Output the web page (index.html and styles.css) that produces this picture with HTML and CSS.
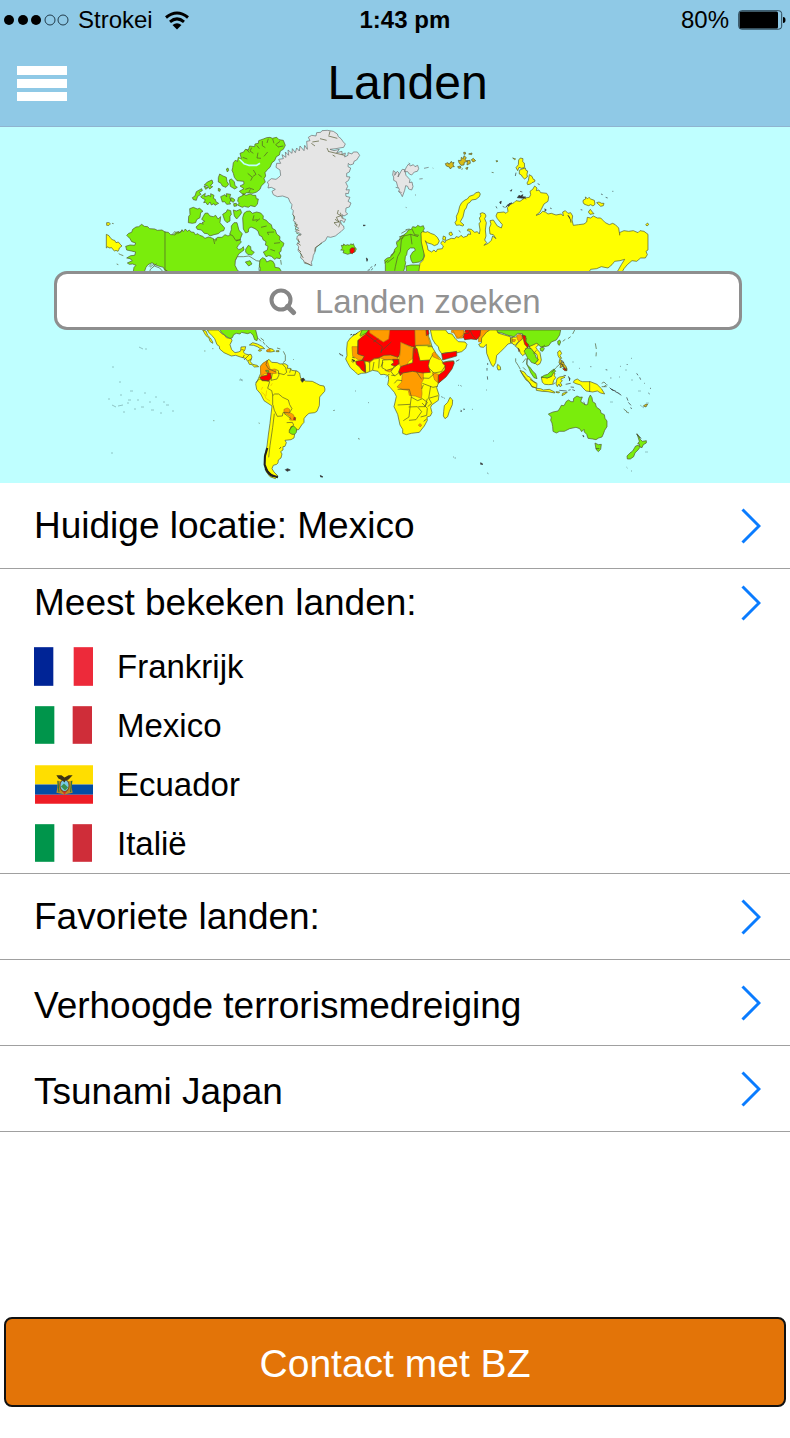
FILE: index.html
```html
<!DOCTYPE html>
<html lang="nl">
<head>
<meta charset="utf-8">
<meta name="viewport" content="width=device-width, initial-scale=1">
<title>Landen</title>
<link rel="stylesheet" href="styles.css">
</head>
<body>
<div class="app">
  <header class="header">
    <div class="status">
      <div class="status-left">
        <svg class="signal" width="66" height="12" viewBox="0 0 66 12" aria-hidden="true">
          <circle cx="5" cy="6" r="5"/><circle cx="19" cy="6" r="5"/><circle cx="32" cy="6" r="5"/>
          <g fill="none" stroke="#223b4a"><circle cx="46" cy="6" r="5"/><circle cx="59" cy="6" r="5"/></g>
        </svg>
        <span>Strokei</span>
        <svg class="wifi" width="24" height="19" viewBox="0 0 24 19" aria-hidden="true">
          <g fill="none" stroke="#000" stroke-width="3"><path d="M1 6.5Q12-2.5 23 6.5"/><path d="M5 10.800Q12 5 19 10.800"/></g>
          <path d="M7.500 14Q12 10.500 16.500 14L12 18.500z"/>
        </svg>
      </div>
      <span class="time">1:43 pm</span>
      <div class="status-right">
        <span>80%</span>
        <svg width="48" height="20" viewBox="0 0 48 20" aria-hidden="true">
          <rect x=".7" y=".7" width="43" height="18.500" rx="3" fill="none" stroke="#2b4757"/>
          <rect x="1.500" y="1.500" width="38.500" height="17" rx="1.500"/><path d="M45 7q2.500 0 2.500 3T45 13z"/>
        </svg>
      </div>
    </div>
    <div class="nav">
      <button class="menu" type="button" aria-label="Menu"><span></span><span></span><span></span></button>
      <h1>Landen</h1>
    </div>
  </header>

  <main>
    <section class="hero">
      <svg class="map" viewBox="0 127 790 356" role="img" aria-label="Wereldkaart met reisadviezen">
        <!-- North America -->
        <g class="land" transform="translate(100 126) scale(.33333)">
          <path class="yellow" d="M19 325l8 4 6 9 6 4 5 1 4 7 7-2 6 7 5 5-8 6-1 4-3 6-6-3-4 2-5-4-4-6-8 1-3-4-5 4zM20 290h8l3 4-4 4h-7zM36 292l5 1M50 414l5 2M56 383l6 3 8 3"/>
          <path class="green" d="M80 328L86 322 95 319 98 310 108 303 116 302 125 295 133 301 143 302 149 308 164 309 172 313 186 312 195 318 205 319 212 326 222 326 227 319 235 317 240 321 246 311 250 317 256 309 262 316 268 312 273 318 282 319 286 326 294 323 299 328 308 331 315 337 325 333 336 336 344 341 353 334 366 334 375 326 384 330 392 326 397 316 404 309 408 315 416 315 422 328 417 338 424 348 415 358 411 365 416 371 424 368 430 362 432 372 424 378 416 384 411 394 406 405 408 420 412 428 418 434 418 446H225L208 438 195 434 190 424 175 420 165 416 156 410 144 416 138 424 130 446 105 446 100 436 102 424 108 418 98 414 88 415 82 411 97 404 90 398 80 396 92 389 104 388 107 378 94 375 80 372 77 361 90 357 104 358 107 351 95 347 90 338z"/>
          <path class="sea" d="M412 392l-6 12-1 14 8 16 26 12h40l-2-18 4-22-12-2-22-14-16 2zM147 446l4-16 12-10 16 6 18 20z"/>
          <path class="green" d="M437 370l8-12 7 4 1 10 10 7-8 8-12-2-6-7zM436 408l14-4 6 10-10 6zM480 402l8-7 8 4 4 9 11-5 8 3 5 9 1 9 13 2 6 10v12h-66l3-20-3-9z"/>
          <path class="green" d="M428 275L432 262 440 256 450 255 457 262 470 258 482 261 490 270 489 279 499 283 506 291 514 296 517 307 526 312 530 324 540 332 539 342 552 352 549 361 544 366 543 376 537 380 543 390 540 398 530 396 524 400 514 391 506 389 498 392 490 378 502 372 504 361 496 357 498 347 489 341 486 332 478 328 474 315 465 308 453 303 446 308 445 318 437 321 430 309z"/>
          <path d="M195 316V430l8 6 3 10M216 326l10-11M223 328l15-12M233 323l15-10M340 338l4 16M350 338l-3 8M147 422l8-9M150 424l12-10M160 421l10-8M408 345l15-5M542 402l2 14"/>
          <path class="green" d="M265 290l1-19 4-5-1-18 11-4 12 5 7-2 10 9-7 4-2 15-10 6-3 9-10 2zM288 303L300 292 310 294 306 290 314 286 305 280 315 262 323 261 330 270 340 272 347 268 354 279 362 272 360 290 374 306 371 314 363 316 355 323 342 326 330 330 322 323 313 322 304 312 292 310zM368 265l11-7 3-7 10 3 2 12-4 4 0 15-9 5-7-7zM400 252l9 3 12-5 4 10-7 10-8 9-7-9zM394 300l8-10 9 0 6 23 10 10-7 18-13 2-9-14-9-4 5-14z"/>
          <path class="green" d="M398 125L400 110 407 102 412 107 415 94 424 98 420 82 431 78 436 70 445 72 449 60 464 62 465 54 475 52 476 44 490 39 500 35 510 34 517 37 530 34 537 41 550 43 556 58 550 70 541 75 538 87 529 92 524 104 516 110 510 124 503 130 495 140 497 150 492 158 496 168 484 180 480 190 470 198 458 202 440 200 430 206 418 196 432 188 420 180 432 174 431 166 411 164 403 154 400 142 396 133zM415 215l14-7 0-5 9 5 13-4 8 4 8 0 2 10 6 1-3 16-7 7-13-3-7 5-12-3-6 3-15-7 6-6-5-5z"/>
          <path class="green" d="M277 215l8-5 4-13 16-9 2 6-9 5 5 6-10 6-4 12-9-2zM302 212l14-10-2 10 13-4 5 4 0-9 10 5-2 9 6 3 2 7 8 5-11 6-3-5-8 4-4-9-7 9-6-8-6 1 5-9-9-4zM322 168l14-6 3 9-8 8 7 3-9 7-7-10-9-2zM312 180l12 5-7 5zM355 155l4-11 10 6 10 4 2 13 5 8-8 9-11-4-4-8-8-4zM388 162l6-3 9 8 2 12 7 5-8 5-13-8zM362 212l13-6 5 7-1-10 13 2-3 10 4 8-4 6 3 5-12 1-6-8-7 1zM379 129l5-3 2 7-4 5zM392 215l7 2 6 5-5 7-8-5zM401 233l8-1 1 8-8 1zM355 187l6 2-1 7-5-1z"/>
          <path d="M440 70l8 10M455 65l-5 10 10 7M470 58l8 10M487 45l0 14 9 6M505 38l-4 13M518 39l4 13M540 46l-13 10 8 7M550 60l-16 3M428 94l14 5M474 80l-3 16 12 1M503 78l-11 13M443 142l14 12-5 10M460 132l8 13-10 7M475 145l10 8M436 190l12-4 14 5M446 200l5-10M462 268l-4 15 15-2M480 278l-12 9M500 300l-17 4M522 318l-20 1 4 8M540 350l-18 2M525 375l-14-5"/>
          <path class="channel" d="M418 99l14 14 14 5 24 0 10-6"/>
        </g>
        <!-- Greenland, Svalbard and Iceland -->
        <g class="land" transform="translate(260 126) scale(.33333)">
          <path class="gray" d="M140 46L150 44 145 34 155 28 168 30 170 20 182 19 186 14 202 13 220 16 232 24 235 32 243 38 250 48 256 54 251 64 238 66 228 68 210 70 222 74 238 70 230 80 246 76 246 85 256 81 254 93 264 88 264 80 276 84 280 78 292 78 299 88 290 102 282 106 280 114 270 117 265 112 264 122 272 126 268 138 260 142 260 152 270 153 265 164 257 169 263 181 258 192 268 191 265 203 257 202 258 211 270 214 264 226 273 231 268 243 258 246 257 258 263 264 252 270 247 266 249 278 257 280 252 290 247 284 240 284 246 297 251 300 252 308 244 316 236 322 226 330 212 334 202 332 196 344 184 351 174 360 168 364 166 376 160 388 158 400 154 409 156 419 145 414 134 412 130 402 122 396 124 384 114 374 116 362 110 354 120 348 110 340 112 330 124 325 116 320 106 316 116 306 104 300 108 290 100 284 104 272 98 266 100 254 94 248 96 236 90 228 85 216 68 210 52 212 40 206 36 196 46 190 34 184 24 186 26 176 22 168 34 158 48 160 56 154 62 148 60 132 48 124 50 112 62 112 56 100 70 98 66 86 78 94 76 78 86 88 84 72 96 82 97 68 106 80 110 66 118 75 120 60 132 74 134 58 142 70z"/>
          <path d="M157 48l20-3M180 38l20 5M205 30l27 7M210 16l-3 12M165 60l-11-8M205 75l-4-9M226 92l-8-5M235 252l-3 11 11 6-14 5 8 14-15 2 10 10M241 260l6 18M225 280l16 10-5 14M102 290l12 8M108 320l14 8M112 350l10 8M115 370l8 8M204 76l50 12"/>
          <path d="M186 351l-20 14-2 12M100 266l4 14M110 296l-4 14 12 4M114 338l2 10M120 380l10 16M134 408l18 10"/>
          <path class="gray" d="M400 134l6 4-2 10 8-12 5 5-3 12 9-17 4-6 7 1 4 17 12 13-2 9 8-2 3 14-4 10-9-3-3-8-6-2-3 14-7 19-5-10-6-5 2-7-5-8-4-15-8-4 0-10-3-6zM435 132l5-10 6-8 5 6 9-4 5 6 8-4 3 10-4 8-9 2-8 9-7-3-5-7-10 0zM407 184l8 2M416 196l9 4M446 111l5 3M478 159l10-1M492 127l14-3M465 206l3 2M437 244l3 1M518 126l2 1"/>
          <path class="green" d="M244 358l7 1-1-5 7 4 6-2 5 2 5-5 3 4 4-4 3 8 6 8-4 9-10 3-12 4-14-5 3-7-10-1 5-5z"/>
          <path class="red" d="M270 370l5-5 9 1-1 11-6 6-7-3z"/>
          <path class="ink" d="M310 297l6 1-5 2zM319 396l4 3-2 7zM347 414l-3 7M336 421l-5 6M338 427l-4 6M323 433l7-2"/>
        </g>
        <!-- Scandinavia and Russia -->
        <g class="land" transform="translate(380 126) scale(.33333)">
          <path class="green" d="M14 402L22 396 31 394 34 386 41 381 44 370 52 361 49 350 57 344 62 332 70 328 80 320 85 312 94 310 98 302 108 304 113 298 121 302 130 299 133 308 130 313 133 322 126 332 128 358 130 368 133 382 131 394 127 402 118 408 98 411 93 402 91 390 98 378 106 373 103 366 91 366 82 374 80 386 76 392 75 404 77 410 74 425 68 446H16V416zM78 420l15-3 25 0 4 6v23H80z"/>
          <path d="M44 434l2-12 7-30 8-15 3-35 8-12 20-5 22 7M92 325l4 30M96 309l8 17 13 2M22 410l20-16M14 411l11-9M34 391l11-16M49 347l20-13M57 333l17-6M64 322l16-9M77 311l12-2"/>
          <path class="yellow" d="M123 321L128 317 137 319 143 317 152 322 163 326 172 334 178 345 173 355 163 359 154 354 140 350 136 344 142 360 144 372 155 378 162 372 168 378 172 370 187 368 190 360 182 352 188 344 195 350 197 344 214 337 224 338 228 332 237 334 243 328 250 334 262 330 264 324 272 325 270 316 262 314 264 309 274 310 284 319 292 317 298 324 300 312 297 292 302 288 298 276 303 270 300 263 307 260 315 263 318 270 314 278 319 290 316 312 318 330 314 342 320 350 312 358 325 352 334 343 338 330 348 338 340 326 330 324 328 306 333 294 330 284 340 282 352 300 364 306 367 296 352 278 348 270 352 260 372 258 378 262 384 256 382 244 390 236 402 230 408 224 420 226 434 216 448 214 452 206 450 196 458 190 464 180 471 186 469 194 477 192 482 200 500 202 506 212 504 226 492 234 484 250 480 258 468 268 480 264 488 256 496 258 504 264 514 262 528 267 544 264 550 270 548 258 556 254 564 262 572 260 578 270 576 282 580 298 596 296 612 294 620 288 622 274 632 276 640 270 652 276 662 276 670 284 676 290 688 296 698 292 706 296 716 306 718 320 732 314 746 316 760 314 774 320 780 314 792 316 804 325 804 372 798 376 802 386 796 396 782 396 770 406 756 404 742 416 732 428 722 446 706 446 716 430 724 416 734 400 720 404 704 406 696 416 684 426 664 422 650 428 632 430 622 446H115L120 412 128 404 134 390 128 366 124 348z"/>
          <path class="yellow" d="M225 290l5-8-1-11 6-13 4-17 6-11 10-8 7-3 6-8 12-4 8-7 9-2 4 6-3 8-10 8-13 2-5 7-7 4-5 15-4 3-5 22-8 14 11 10-4 3-10-3-9 1zM408 125l7-9 1-14 5-6 8 2-1 9 5 4 1 13-9 3-8-3-4 10zM418 133l8-4 10-3 2 7 5 2-2 10 1 8-8 6-6-5-4-7-6-3zM448 146l8 5 4 9 5 2-1 5-8 3-4 4-9 2-2-5 4-7zM610 222l7-3-1-6 7 5 4-4 5 5 11 4 2 12-6 5-7-4-6 3-7-2-7-3-3-6zM650 230l7-2 8 4 7 0-2 7-8 2zM625 258l6-8 6 8 5 5-12 2zM208 320l6-2 4 8-6 3-5-4zM190 330l7 3-1 10-8-3zM237 313l4 6M797 296l6-5 3 5-5 4zM398 96l9 3-3 2zM348 104l6 1-4 3z"/>
          <path class="gold" d="M196 113l8-3 3 5 7-9 3 5 5-2-3 8 4 5-5 0-7 7-3-6-9-3zM237 110l-2-7 8 1 1-10 6 4 2-9 7 6-4 6 7 5-9 3-1 8-9 1zM261 104l9-1 1 9-10 5 1-10zM274 101l6-4 7 7-8 4zM251 79l5 0 1 5-5 1zM266 84l10-3-1 5zM233 122l8-2 2 6-7 1zM257 126l7-2-3 7zM335 139l6 1M244 130l5-2"/>
          <path class="ink" d="M377 244l7-8 2 5 4-7 6-3-9 2-6 7zM412 215l5-7 4 2 8-4-3 6 11 1-5 4zM359 228l5-2-2 8zM368 241l6 3M348 241l3 6M391 194l5-3-3 5zM420 196l7 2M473 173l6 3M435 216l3 4M570 276l-6-8 8 14 1 8M719 320v8M494 248l5 4-5 4M510 246l5 2M663 204l5 2M677 214l6 2M697 196h3M602 251l5 1M408 140l-2 10"/>
        </g>
        <!-- Central and South America -->
        <g class="land" transform="translate(190 320) scale(.33333)">
          <path class="green" d="M84 20h113v10l6 24-2 8-7-3-5-14-8-7-8 3-10-2-8-2-5 5-11-2-8 4-4 9-5 2-5 0-12-9-11-9z"/>
          <path class="yellow" d="M52 30h33l10 11 8 4 6 8 15 3 2 6-6 12 5 15 10 9 10-2 7-3 1-12 14-1-2 9-5 7 6 6 9 2 8-1 3 8-5 14 7 8 13 3 5 4-13 1-7-7-8-1-3-7-9-11-15-4-14-5-13 2-22-10-13-11-1-8-7-5-7-18-9-10-8-8zM38 30l10 3 5 13 8 8 7 12 0 4-8-6-3-10-9-7z"/>
          <path class="yellow" d="M212 138l8-9 9-5 8-6 8 9 17 1 8 4 15-1 9 6-2 8 9 0 4 6 16 2 8 6 3 16 8 1 5 7 22 1 12 6 11 6 12 2 3 9-1 7-9 10-6 7-1 26-7 17-7 4-17 2-9 8-6 8 0 11-7 8-9 14-12 1-4 3 4 10-2 11-9 5-18 2 4 7-4 11-6 1 0 10-7 5 4 7-3 12-8 6-1 9-4 4L250 436 246 446 252 456 264 468 256 476 240 470 229 456 223 438 223 410 231 378 235 345 240 310 246 258 234 250 222 242 212 222 200 208 197 192 205 176 212 160z"/>
          <path class="orange" d="M211 140l8-10 13-8 4 12 5 15 15-2 3 13-18 1-18 1-10 6-1-15zM282 268l10-4 7 4-1 9 12 7 4 10-3 7-12-1 2-10-10-7-9-5z"/>
          <path class="red" d="M209 172l8-4 14-2 2-8 9 2 2 14-8 9-20-1zM312 292l5 1-1 8-5-2z"/>
          <path class="green" d="M303 320l8-2 9 9-1 10-5 6-8 0-9-6zM227 151l8 0 2 5-8 0z"/>
          <path class="yellow" d="M178 75l10-7 14 4 14 7 8 7-13 0-9-6-11-4zM207 89l8 1-4 4-6-2zM239 85l10 3 5 6-12 2-11-1-1-4 8-1zM259 92h8v3h-8z"/>
          <path class="orange" d="M232 89l7-3 2 8-11 0z"/>
          <path d="M197 188l11-11 22 5 9 3-6 20 12 7 3 13 0 30M248 227l6-5 12 0 12 10 17 8 4 14 7 12-8 13-10-2-9 1-2 10-15 1-9-18-4-16M253 281l-5 41-8 55-4 35M282 280l22 17M290 308l17-1 4 8-14 16M258 149l7 3 2 13-6 12-18 4 4-20M232 120l-4 14 8 13 22 9M277 132l10 11 3 14-8 7-19-5M303 145l-4 13M318 152l-4 14-22 0M163 105l-5 9M177 105l-15 15M185 116l-11 7M154 88l9 3"/>
          <path class="coast" d="M232 384l-7 24-1 26 8 20 12 12 20 6"/>
          <path class="coast" d="M226 445l12 17 13 7"/>
          <path class="ink" d="M332 179l8-5 4 5-7 8zM286 449l7-3 8 4-10 4zM391 466l8 5-7 0zM268 387l5-6M151 177l6 5"/>
          <path d="M212 54l10 8M205 55l8 9M219 65l6 9M228 76l10 9M261 84l10 3M280 94l6 12 0 16-7 6M482 44l4-1M488 45l6-2M497 45l6-3M449 101l3 5M455 103l4 5M70 302h3M67 86h3M206 309l3 1M430 271l2 2M505 355l3 2M43 93h3M310 118l2 2"/>
          <path class="sketch" d="M218 201l-4 8M214 216l10 8 4 12M229 236l11 7M247 190l-5 8M230 211l-2 17"/>
        </g>
        <!-- Africa and Arabia -->
        <g class="land" transform="translate(330 320) scale(.33333)">
          <path class="yellow" d="M95 30h198l3 20 6 15 4 15 12 20 12 14 9 13 18-4 15 0-5 17-17 25-25 25-5 13 7 22-2 16-20 14-3 7 4 16-5 10-10 3 1 10-9 17-15 19-24 3-15 4-11-4 0-12-8-13-7-32-11-23 4-17 3-14-6-12-12-14-8-9 3-15-1-12-13-4-10 1-8-10-16-3-20 8-14 1-10 4-8-8-15-13-9-16-5-10 4-10-1-20 2-20 9-13 9-7z"/>
          <path class="green" d="M96 30h22l-2 7-12 4-12 8-2-3z"/>
          <path class="orange" d="M66 80h20l0 24 30 4 14-4 16 6 14-10 24-2 22 4-4 20-30 0-20-8-20 4-14 10-14-8-18 0-18-12z"/>
          <path class="red" d="M84 61l22-18 10-13h71 68l2 54-43-15-5 35-5 8-22-7-20 1-17 8-12 1-13 9-26-1 9-14-20-7z"/>
          <path class="orange" d="M119 30h60l-3 27-16 9-15-10-26-18zM212 67l38 18-2 30-13 10-4 12-20 2-5-16 5-24zM255 30h35l2 13 9 30-45 3zM217 159l30-6 33 4 0 21-6 12 2 31-2 14-18-7-18-2-3-15-16-2-18-8 14-15zM306 102l7-7 16 24-20-9zM307 158l19 5-2 25-10-8zM165 151l12-13 7 4 2 8-8 6z"/>
          <path class="yellow" d="M158 120l22-1 14 2 6 14-10 10-20 6-14-8z"/>
          <path class="red" d="M250 85l11 0 4 16 5 21 29-2-4 17 6 20-23 2-30-5-30 5-7 8-5-12 6-15 36-12zM370 123l3 6-7 18-18 24-23 19 0-24 20-16 0-13-8-9 11-2zM77 124l12-2 12-1 5 15 1 22-12-8-6-9-10-8zM188 118l18 0 1 14-12 7-12-5 8-6zM288 30h7l2 12-8 5z"/>
          <path class="yellow" d="M301 30h46l7 10 12 2 10 14 9 9 20 1 6 7-4 12-12 10-17 4-28-1-15 3-8-11-2-10-9-8-9-15zM360 232l8 8-1 14-9 20-5 16-8 6-5-8 1-13 2-18 10-10z"/>
          <path class="red" d="M335 101l45-7 0 14-24 7-18 5zM405 30h45v26l-31-7-15 10z"/>
          <path class="orange" d="M365 30h32l10 8-9 16-18 1-6-15-10-3zM398 52l11 3 7-4-2-9-15 0z"/>
          <path d="M107 42l50 38-4 19M145 56l-15 10M184 66l-32 29M84 61l0 40M252 76l4 24M105 122v34M119 125v28M132 126l-4 24M148 116l-2 29M159 126l-6 14M193 138l-10 17 11 14M206 157l10 2M184 166h13l10-8M193 190l9-10 14 2M203 208l35 0 6 22-3 23-38 2M241 253l-4 38-17 11M243 231l20 11 14-6 15 11-7 13-20 0M236 261l26-1 13 15-17 24-21 2M276 249l16 16-2 21-18 5M277 190l32 12 14-3M278 174l19 1 15-13M280 195l-5 12M302 198l-6 37 28-8M292 236l-7 24M297 236l8 14-12 10M260 156l15 22M293 80h15M257 77h47M299 120l9-16M298 145l14 14 22-4 13-19"/>
          <path class="orange" d="M265 315l5-4 5 4-4 6z"/>
          <path class="ink" d="M66 111l8 3M66 118l9 4-4 3zM64 123l6 5M290 297l-9 7M61 45l5-2M68 46l6-3M76 44l6-5M28 100l5 4M34 104l4 5M334 230l4 2M341 233l3 2M392 271l4 3M401 266l3 2M168 172l3-3M175 165l3-3M76 213h2M12 271h2M115 248h2M86 357h2M392 196l2 3M378 124l10-5"/>
        </g>
        <!-- Asia and Oceania -->
        <g class="land" transform="translate(450 320) scale(.33333)">
          <path class="orange" d="M8 30h33l-1 15-14 9-9-7zM82 30h35l-8 13-9 8 4 12-18 3-2-19z"/>
          <path class="red" d="M43 40l12 0 5-10h32l-2 17-10 12-17-2-18 2-5-7z"/>
          <path class="green" d="M139 30h193l-3 15-10 15-15 6-8 11-15 4-10-1-8-8-15 5-7 4-9-5-12-17-3-18-14-1-11 10-18-4-18-7-15-2z"/>
          <path class="green" d="M270 85l8-4 5 5-5 8-6-2zM323 64l6-4 3 6-4 10-4-3z"/>
          <path class="yellow" d="M110 36l10-6h20l4 9 19 6 18 5 1 20-8 2-9 10-16 16-9 8-3 22-7 12-5-4-8-18-7-18-1-20 0-7-8 9-10-1-5-8 8-4 1-15zM143 133l8 7 1 9-8 1-3-9zM182 54l8-2 12-2 14-5 3 10-14 10-9 11-7-3-7-7zM196 79l8-11 12-10 5-12 8 8-2 18 9 9-10 5 2 13-10 8-7-8-4-12zM237 80l12-5 10-5 7 4-8 8 4 7 8 9 4 22-4 11-8 4-8-6 10-7-3-18-14-11z"/>
          <path class="red" d="M217 45l10 3 0 16 8 10-2 9-9-10zM204 84l5 8-2 3z"/>
          <path class="orange" d="M200 45l13-2 4 12-10 10-5-8zM187 58l10 1-3 6-7-1z"/>
          <path class="green" d="M222 93l9-9 13 2 10 14 5 14 6 4-10 13-11-4-7-10-6 0 0 17 8 7 9 12 9 9 4 14-9-3-10-15-5-12-7-14 2-20z"/>
          <path class="yellow" d="M210 151l13 5 8 11 9 5 9 11 12 7-1 14-14-3-8-14-10-7-8-12zM274 172l8-2 9 4 12-5 4-12 8 2-2 8 4 6-6 8-3 12-12 1-12-1-7-6zM321 176l8-5 12-2 4 3-13 5 5 6-6 5 5 8-6 4-3-8-5 8-4-8zM373 181l9-4 9 6 6 2 24 0 20 8 14 14 9 15-12-3-10-6-14 3-20-3-10-10-6-8-14-4-8-4zM259 205l13 1 8 4 18-2 16 8 0 3-20-4-18-1-17-3zM318 215l11 1-3 3-8-2zM338 220l14-4-6 6-10 5zM323 96l7-5 5 9-5 7 5 8-6 0-5-8z"/>
          <path class="green" d="M273 172l10-6 10-3 8-8 11-8 5 7-7 5-5 10-13 5-9-1zM295 282l14-6 15-3 6-9 4-8 8 1 7-13 7-4 7 5 7 0 1-10 10-7 9 4 7-1-5 13 9 7 7 4 5-2 3-18 5-10 5 8 2 12 8 5 3 11 12 9 2 9 10 5 2 11 6 8 0 17-7 11-4 11-4 9-10 3-8 5-10-2-14-2-4-12-7-7-1-8-7 7-6-9-11-4-19 4-16 8-14 0-10 5-10-5-1-14-2-11-4-8 2-10zM435 369l10 5 9-1-2 15-7 7-7-7zM561 341l6 8 4 9 6 6 12-2 0 7-9 5-4 9-7-3-1-8-5 0 5-8zM531 408l9-9 8-6 9-15 8-2 5 6-6 8-9 9-4 11-10 7-9 0z"/>
          <path class="red" d="M338 146l8-3 5 2 0 7-7 0z"/>
          <path class="gold" d="M329 118l6 3-1 8 5-4 5 9 5 7 0 11-5-8-6-4-8 3 2-8-5-7z"/>
          <path d="M419 184v32M186 72l0-22M234 71l6 12M251 101l8-10M240 178l18 12M316 188l-7 5M276 82l9-7M401 245l4 10M60 30l7 15 12 14M212 154l10 14 13 16 11 15 12 5M228 151l-9-9M218 128l10-13M197 115l0 10 8 12 6 11M305 158l12-14 14-13M455 190l7-4 8 8-8 6M455 200l15 0M374 30l-6 12M362 50l-8 6M346 58l-8 6M436 70l3 17M439 97l-1 12"/>
          <path class="ink" d="M334 132l14 18M330 129l12 7M336 121l6 8M355 169l5 7-2 7M347 193l15-3M362 201l10 1M328 211l22 2M355 211l7-2M367 209l8 3M341 166l7 1M479 203l7 7 12 4M496 215l9 4 9 7M530 232l4 10M535 247l8 9M541 263l5 3M559 343l15 12M398 345l4 4-3 2M438 386l10 0M92 428l7 5-7 0zM112 459l3 2M31 274l5-1M40 269l4-1M9 411h2M14 414h3M130 363h2M109 210h2M112 169l1 10M111 144v8M113 129v6M66 268h2M25 196h2M387 145h2M421 140h3M467 149l5 1M510 139h2M530 132l3 3M543 115h2M560 160l4 6M569 172l3 7M583 190h2M600 205h3M595 219l4 3M481 174h3M508 171h2M530 442l2 2M544 453h2"/>
          <path class="gold" d="M521 267l10 8M528 275l9 4M580 258l7-5 6-1-5 9z"/>
        </g>
        <g class="specks"><path d="M112 367h2M139 347l4 2M145 349h2M112 405l4 2M108 399h2M118 406l5-1M127 403h2M134 409h2M141 407h3M149 402h2M151 410h3M160 413h2M166 405h3M172 411h2M120 395h2M130 391h3M137 400h2M144 393h2M155 397h2M163 402h2M123 412h2M111 453h2M128 400h3M119 382h2M239 380h4M640 405l4 3M646 403h3M645 452h3M625 370h2M631 380h2M638 391h3M606 385h2M610 402h3M572 362h2"/></g>
      </svg>
      <form class="search" role="search">
        <label for="search" aria-label="Landen zoeken">
          <svg width="28" height="28" viewBox="0 0 28 28" aria-hidden="true"><circle cx="12" cy="12" r="9.500" fill="none" stroke="#858585" stroke-width="4"/><path d="M18.500 18.500l6 6" stroke="#858585" stroke-width="5" stroke-linecap="round"/></svg>
        </label>
        <input id="search" type="text" placeholder="Landen zoeken">
      </form>
    </section>

    <nav class="rows" aria-label="Landen">
      <a class="row" href="#locatie"><span>Huidige locatie: Mexico</span><svg class="chevron" viewBox="0 0 20 36" aria-hidden="true"><path d="M1.500 1.500L18 18 1.500 34.500"/></svg></a>
      <section class="group">
        <a class="row row-title" href="#meest"><span>Meest bekeken landen:</span><svg class="chevron" viewBox="0 0 20 36" aria-hidden="true"><path d="M1.500 1.500L18 18 1.500 34.500"/></svg></a>
        <ul class="countries">
          <li><a href="#frankrijk"><svg class="flag" viewBox="0 0 58 38" aria-hidden="true"><path fill="#002496" d="M0 0h19v38H0z"/><path fill="#ed2a3a" d="M39 0h19v38H39z"/></svg>Frankrijk</a></li>
          <li><a href="#mexico"><svg class="flag" viewBox="0 0 58 38" aria-hidden="true"><path fill="#00954b" d="M1 0h19v37H1z"/><path fill="#cf2d39" d="M38 0h19v37H38z"/></svg>Mexico</a></li>
          <li><a href="#ecuador"><svg class="flag" viewBox="0 0 58 38" aria-hidden="true">
            <path fill="#ffde00" d="M1 0h57v19H1z"/><path fill="#034da3" d="M1 19h57v10H1z"/><path fill="#ee1c25" d="M1 29h57v9H1z"/>
            <path fill="#b98b22" d="M23 15l4 1h6l5-1-1 7 1 5-5 1-3 1-3-1-5-1 1-5z"/>
            <path fill="none" stroke="#24753b" d="M23.500 15.500l1 11M37 15.500l-1 11"/>
            <ellipse cx="30" cy="20" rx="4.500" ry="6" fill="#77c9e5" stroke="#774817"/><path fill="#3b904c" d="M26.500 21l3-3 4 4-3 3z"/><path fill="#d22c2c" d="M28 26h4l-2 3z"/>
            <path fill="#3d3413" d="M22 10l5 0 3 2 4-2 4 0-4 4-3 1-1 2-2-2-4-2z"/>
          </svg>Ecuador</a></li>
          <li><a href="#italie"><svg class="flag" viewBox="0 0 58 38" aria-hidden="true"><path fill="#00954b" d="M1 0h19v37H1z"/><path fill="#cf2d39" d="M38 0h19v37H38z"/></svg>Italië</a></li>
        </ul>
      </section>
      <a class="row" href="#favorieten"><span>Favoriete landen:</span><svg class="chevron" viewBox="0 0 20 36" aria-hidden="true"><path d="M1.500 1.500L18 18 1.500 34.500"/></svg></a>
      <a class="row row-news" href="#terrorisme"><span>Verhoogde terrorismedreiging</span><svg class="chevron" viewBox="0 0 20 36" aria-hidden="true"><path d="M1.500 1.500L18 18 1.500 34.500"/></svg></a>
      <a class="row row-news" href="#tsunami"><span>Tsunami Japan</span><svg class="chevron" viewBox="0 0 20 36" aria-hidden="true"><path d="M1.500 1.500L18 18 1.500 34.500"/></svg></a>
    </nav>
  </main>

  <footer class="footer"><button class="contact" type="button">Contact met BZ</button></footer>
</div>
</body>
</html>
```

FILE: styles.css
```css
* { box-sizing: border-box; }
body { margin: 0; background: #fff; color: #000; font-family: "Liberation Sans", Arial, sans-serif; }
a { color: inherit; text-decoration: none; }
button, input { font-family: inherit; }
.app { min-height: 100vh; display: flex; flex-direction: column; }

.header { background: #8fc9e6; border-bottom: 1px solid #8fb4d0; }
.status { display: grid; grid-template-columns: 18fr auto 17fr; align-items: center; height: 40px; padding: 0 4px; font-size: 24px; line-height: 40px; }
.status-left, .status-right { display: flex; align-items: center; }
.status-left { gap: 8px; }
.status-right { justify-content: flex-end; gap: 9px; }
.wifi { margin-left: 4px; }
.time { font-weight: 700; }
.nav { display: flex; align-items: center; height: 86px; padding: 0 42px 0 17px; }
.menu { display: flex; flex-direction: column; gap: 4px; width: 50px; padding: 0; border: 0; background: none; }
.menu span { height: 9px; background: #fff; }
h1 { flex: 1; margin: 0; text-align: center; font-size: 48px; font-weight: 400; line-height: 56px; }

.hero { display: grid; background: #bfffff; }
.map, .search { grid-area: 1 / 1; }
.map { display: block; width: 100%; }
.land { stroke: #50542c; stroke-width: 2; stroke-linejoin: round; fill: none; }
.yellow { fill: #ff0; }
.green { fill: #7aed0c; }
.red { fill: #f00; }
.orange { fill: #ff9c00; stroke: #b57a18; }
.gray { fill: #e5e5e5; stroke: #666; }
.gold { fill: #d8bc18; }
.sea { fill: #bfffff; }
.ink { fill: #333; stroke: #333; }
.coast { stroke: #222; stroke-width: 6; }
.channel { stroke: #bfffff; stroke-width: 5; }
.sketch { stroke: #e9bd00; }
.specks { stroke: #8fc4c4; }
.search { align-self: center; display: flex; align-items: center; justify-content: center; gap: 18px; height: 59px; margin: 0 48px 10px 54px; padding-left: 24px; border: 3px solid #8e8e8e; border-radius: 13px; background: #fff; }
.search label { display: flex; padding-top: 4px; }
.search input { width: 236px; padding: 4px 0 0; border: 0; outline: 0; background: none; color: #333; font-size: 33px; line-height: 40px; }
.search input::placeholder { color: #929292; opacity: 1; }

.row { display: flex; align-items: center; justify-content: space-between; gap: 16px; min-height: 86px; padding: 0 29px 0 34px; border-bottom: 1px solid #a0a0a0; font-size: 37px; line-height: 44px; }
.chevron { flex: none; width: 20px; height: 36px; fill: none; stroke: #0a7cff; stroke-width: 3; }
.group { border-bottom: 1px solid #a0a0a0; }
.row-title { min-height: 68px; border-bottom: 0; }
.row-news span { padding-top: 7px; }
.countries { margin: 0; padding: 0 34px; list-style: none; }
.countries a { display: flex; align-items: center; gap: 24px; min-height: 59px; font-size: 33px; line-height: 40px; }
.flag { flex: none; width: 59px; height: 39px; }

.footer { margin-top: auto; padding: 24px 4px 31px; }
.contact { display: block; width: 100%; min-height: 90px; padding: 4px 16px 0; border: 2px solid #111; border-radius: 8px; background: #e37408; color: #fff; font-size: 39px; line-height: 48px; }
```
